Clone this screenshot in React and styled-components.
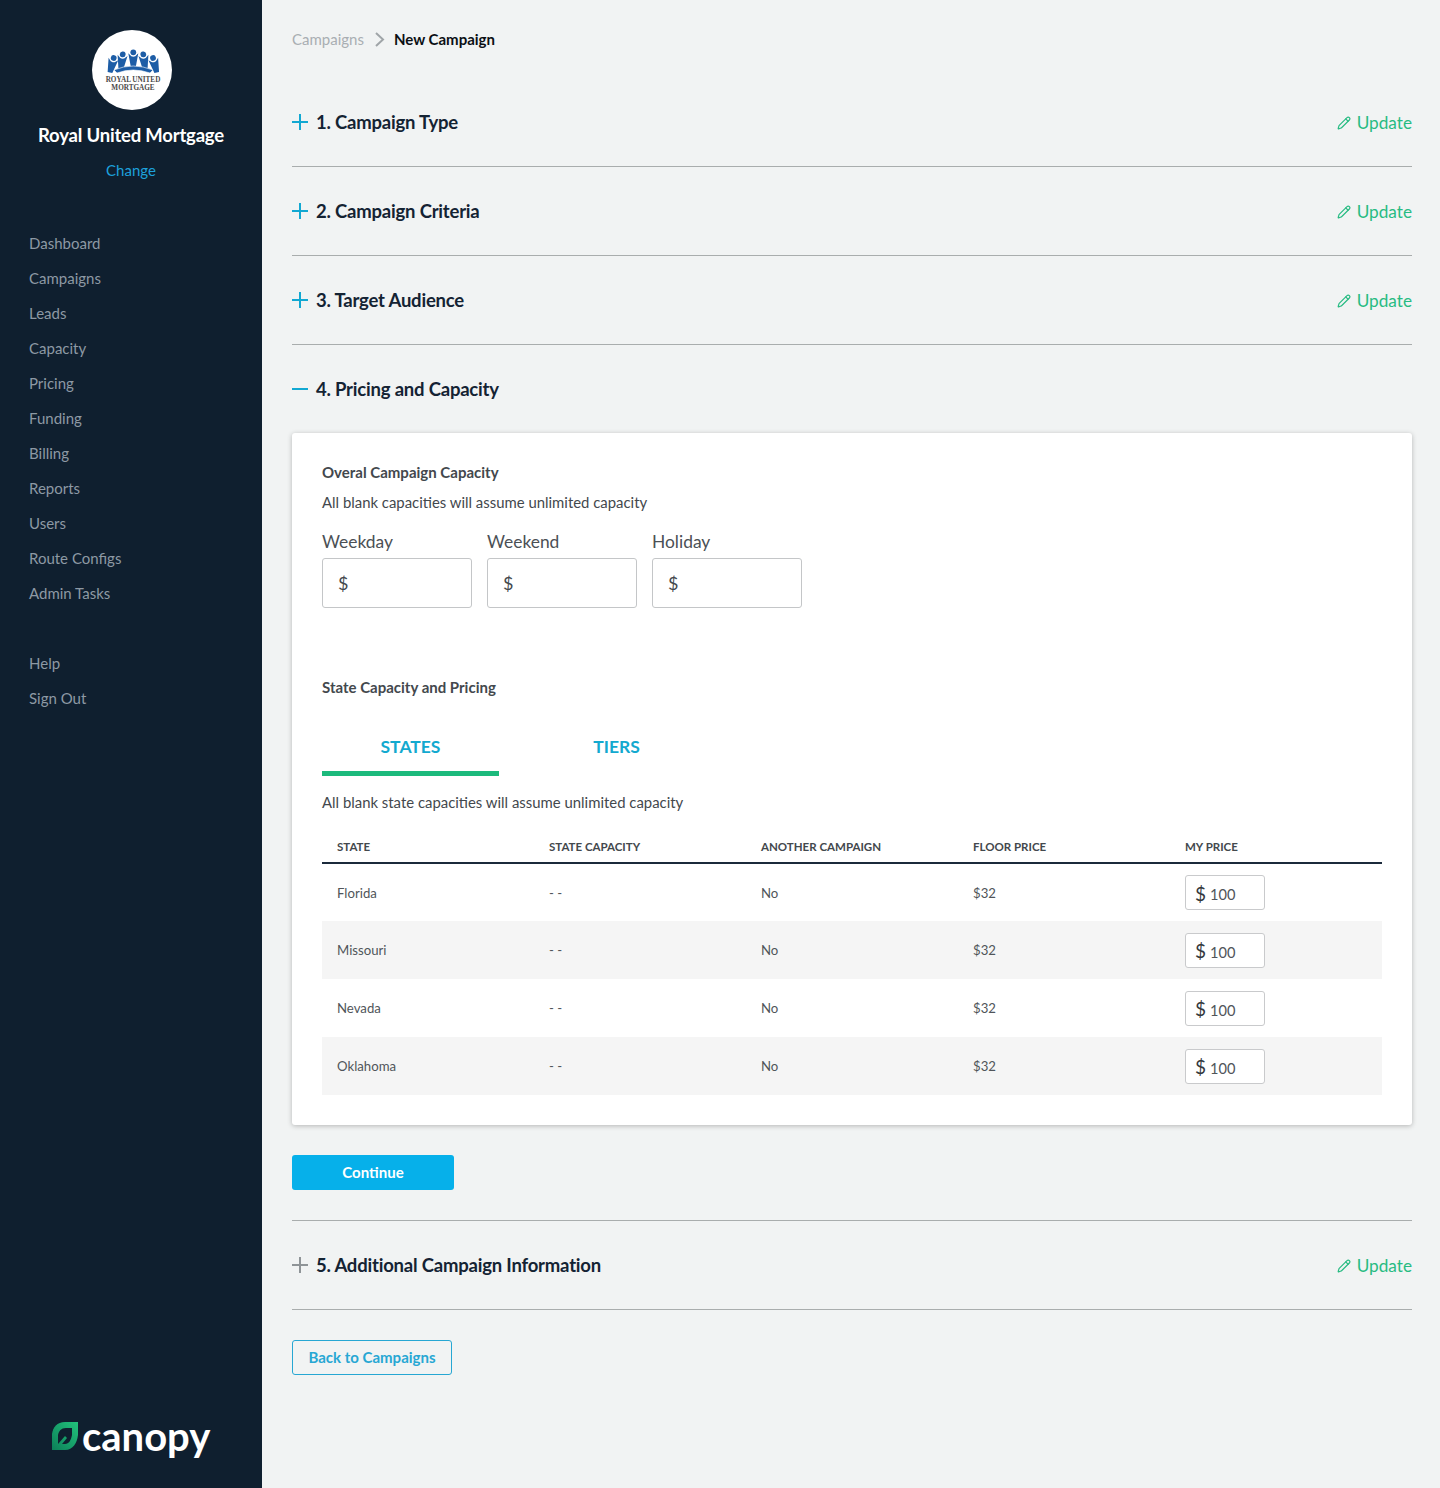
import React from "react";
import styled, { createGlobalStyle } from "styled-components";
import { Pencil } from "lucide-react";

const GlobalStyle = createGlobalStyle`
  html, body {
    margin: 0;
    padding: 0;
    background: #f1f3f3;
    font-family: Lato, "Open Sans", sans-serif;
  }
  * {
    box-sizing: border-box;
  }
`;

const Page = styled.div`
  display: flex;
  width: 1440px;
  min-height: 1488px;
`;

const Sidebar = styled.aside`
  width: 262px;
  flex-shrink: 0;
  background: #0f1f2f;
  display: flex;
  flex-direction: column;
  align-items: stretch;
  padding: 30px 0 34px;
`;

const LogoCircle = styled.div`
  width: 80px;
  height: 80px;
  margin-left: 92px;
  border-radius: 50%;
  background: #fff;
  display: flex;
  flex-direction: column;
  align-items: center;
  padding-top: 19px;
  padding-left: 2px;
`;

const LogoText = styled.div`
  margin-top: ${(p) => p.$top || 0}px;
  font-family: "Liberation Serif", serif;
  font-weight: 700;
  font-size: 7.2px;
  line-height: 8px;
  color: #4a4a4a;
  text-align: center;
  white-space: nowrap;
`;

const CompanyName = styled.div`
  margin-top: 12px;
  color: #fff;
  font-size: 18.5px;
  font-weight: 700;
  letter-spacing: -0.2px;
  line-height: 26px;
  text-align: center;
`;

const ChangeLink = styled.a`
  margin-top: 12px;
  color: #1da1dc;
  font-size: 15px;
  line-height: 20px;
  text-align: center;
`;

const Nav = styled.nav`
  display: flex;
  flex-direction: column;
  margin-top: ${(p) => p.$top}px;
  padding-left: 29px;
`;

const NavItem = styled.a`
  color: #8d99a4;
  font-size: 15px;
  line-height: 35px;
  height: 35px;
`;

const CanopyRow = styled.div`
  margin-top: auto;
  display: flex;
  align-items: center;
  gap: 4px;
  padding-left: 52px;
  height: 36px;
`;

const CanopyWord = styled.span`
  color: #fff;
  font-size: 40px;
  font-weight: 700;
  line-height: 36px;
`;

const Main = styled.main`
  flex: 1;
  padding: 0 28px 0 30px;
`;

const Breadcrumb = styled.div`
  display: flex;
  align-items: center;
  height: 78px;
  font-size: 15px;
`;

const Crumb = styled.span`
  color: #a9aeb2;
`;

const CrumbCurrent = styled.span`
  color: #0b0f14;
  font-weight: 700;
`;

const CrumbChevron = styled.svg`
  margin: 0 9px 0 10px;
`;

const SectionRow = styled.div`
  display: flex;
  align-items: center;
  justify-content: space-between;
  height: ${(p) => (p.$open ? 88 : 89)}px;
  padding-bottom: ${(p) => (p.$open ? 0 : 1)}px;
  border-bottom: ${(p) => (p.$open ? "none" : "1px solid #a9adad")};
`;

const SectionTitle = styled.h2`
  display: flex;
  align-items: center;
  gap: 8px;
  margin: 0;
  color: #142333;
  font-size: 18.5px;
  font-weight: 700;
  letter-spacing: -0.2px;
  line-height: 26px;
`;

const UpdateLink = styled.a`
  display: flex;
  align-items: center;
  gap: 6px;
  color: #27bb82;
  font-size: 17.2px;
  line-height: 24px;
  padding-top: 2px;
`;

const Card = styled.section`
  background: #fff;
  border-radius: 3px;
  box-shadow: 0 1px 5px rgba(0, 0, 0, 0.25);
  padding: 29px 30px 30px;
  height: 692px;
`;

const CardTitle = styled.h3`
  margin: 0;
  color: #43484d;
  font-size: 15px;
  font-weight: 700;
  line-height: 20px;
`;

const Note = styled.p`
  margin: ${(p) => p.$top}px 0 0;
  color: #43484d;
  font-size: 14.9px;
  line-height: 20px;
`;

const Capacities = styled.div`
  display: flex;
  gap: 15px;
  margin-top: 18px;
`;

const CapacityField = styled.label`
  display: flex;
  flex-direction: column;
  width: 150px;
`;

const FieldLabel = styled.span`
  color: #4b5055;
  font-size: 17.4px;
  line-height: 24px;
  margin-bottom: 4px;
`;

const CapacityBox = styled.div`
  height: 50px;
  display: flex;
  align-items: center;
  padding-left: 15px;
  background: #fff;
  border: 1px solid #c4c6c8;
  border-radius: 3px;
  color: #43484d;
  font-size: 18px;
`;

const StateTitle = styled(CardTitle)`
  margin-top: 69px;
`;

const Tabs = styled.div`
  display: flex;
  margin-top: 25px;
`;

const Tab = styled.div`
  width: ${(p) => p.$width}px;
  height: 54px;
  padding-top: 10px;
  text-align: center;
  color: #13a9cf;
  font-size: 17.5px;
  font-weight: 700;
  line-height: 30px;
  border-bottom: 5px solid ${(p) => (p.$active ? "#1cba7c" : "transparent")};
`;

const Table = styled.table`
  width: 1060px;
  margin-top: 22px;
  border-collapse: collapse;
  table-layout: fixed;
`;

const HeadCell = styled.th`
  height: 29px;
  padding: 0 15px 4px;
  text-align: left;
  vertical-align: middle;
  color: #43484d;
  font-size: 11.5px;
  font-weight: 700;
  border-bottom: 2px solid #1b2a3b;
`;

const Row = styled.tr`
  height: 58px;
  background: ${(p) => (p.$shaded ? "#f5f5f5" : "#fff")};
`;

const Cell = styled.td`
  padding: 0 15px;
  color: #50555a;
  font-size: 13.2px;
`;

const PriceBox = styled.div`
  width: 80px;
  height: 35px;
  display: flex;
  align-items: center;
  gap: 4px;
  padding: 4px 0 0 9px;
  background: #fff;
  border: 1px solid #c9cacc;
  border-radius: 3px;
  color: #50555a;
  font-size: 14.6px;
`;

const Dollar = styled.span`
  color: #33383d;
  font-size: 19px;
  line-height: 20px;
  margin-top: -2px;
`;

const ContinueButton = styled.button`
  display: block;
  width: 162px;
  height: 35px;
  margin: 30px 0;
  padding-bottom: 3px;
  border: none;
  border-radius: 3px;
  background: #06b0ea;
  color: #fff;
  font-family: inherit;
  font-size: 15px;
  font-weight: 700;
`;

const Divider = styled.hr`
  margin: 0;
  border: none;
  border-top: 1px solid #a9adad;
`;

const BackButton = styled.button`
  display: block;
  width: 160px;
  height: 35px;
  margin-top: 30px;
  padding-bottom: 3px;
  border: 1px solid #27a7d3;
  border-radius: 3px;
  background: transparent;
  color: #27a7d3;
  font-family: inherit;
  font-size: 15px;
  font-weight: 700;
`;

const menu = ["Dashboard", "Campaigns", "Leads", "Capacity", "Pricing", "Funding", "Billing", "Reports", "Users", "Route Configs", "Admin Tasks"];
const states = ["Florida", "Missouri", "Nevada", "Oklahoma"];
const columns = ["STATE", "STATE CAPACITY", "ANOTHER CAMPAIGN", "FLOOR PRICE", "MY PRICE"];

function Toggle({ open, color = "#12a8d2" }) {
  return (
    <svg width="16" height="16" viewBox="0 0 16 16">
      <rect x="0" y="7" width="16" height="2" fill={color} />
      {!open && <rect x="7" y="0" width="2" height="16" fill={color} />}
    </svg>
  );
}

function Crown() {
  const figures = [[4.7, 8.7, -24], [14.7, 5.3, -12], [26.3, 3.3, 0], [37.3, 5.3, 12], [48, 8.7, 24]];
  return (
    <svg width="53" height="25" viewBox="0 0 53 25">
      {figures.map(([x, y, tilt]) => (
        <g key={x} fill="#1d5da6" transform={`rotate(${-tilt * 0.6} ${x} ${y + 8})`}>
          <circle cx={x} cy={y} r="2.9" />
          <path d={`M${x - 5} ${y + 1}L${x - 2} ${y + 4}L${x} ${y + 4.5}L${x + 2} ${y + 4}L${x + 5} ${y + 1}L${x + 2.4} ${y + 15}L${x - 2.4} ${y + 15}Z`} />
        </g>
      ))}
      <path d="M7 21Q26 13 46 21L43 24Q26 18 10 24Z" fill="#1d5da6" stroke="#fff" strokeWidth="0.6" />
    </svg>
  );
}

function Leaf() {
  return (
    <svg width="26" height="28" viewBox="0 0 26 28">
      <defs>
        <linearGradient id="leaf" x1="0" y1="1" x2="1" y2="0">
          <stop offset="0" stopColor="#0c7f58" />
          <stop offset="1" stopColor="#22c27c" />
        </linearGradient>
      </defs>
      <path d="M26 0H13C5 0 1 5 0 12V28H13C21 28 25 21 26 13Z" fill="url(#leaf)" />
      <path d="M20 6H14C9 6 7 9 6 13V22L13 14L15 16L10 22H13C17 22 19 18 20 13Z" fill="#0f1f2f" />
    </svg>
  );
}

function Section({ title, open, muted }) {
  return (
    <SectionRow $open={open}>
      <SectionTitle>
        <Toggle open={open} color={muted ? "#8f9497" : undefined} />
        <span>{title}</span>
      </SectionTitle>
      {!open && (
        <UpdateLink>
          <Pencil size={14} strokeWidth={2} />
          Update
        </UpdateLink>
      )}
    </SectionRow>
  );
}

export default function App() {
  return (
    <Page>
      <GlobalStyle />
      <Sidebar>
        <LogoCircle>
          <Crown />
          <LogoText $top={2}>ROYAL UNITED</LogoText>
          <LogoText>MORTGAGE</LogoText>
        </LogoCircle>
        <CompanyName>Royal United Mortgage</CompanyName>
        <ChangeLink>Change</ChangeLink>
        <Nav $top={46}>
          {menu.map((item) => (
            <NavItem key={item}>{item}</NavItem>
          ))}
        </Nav>
        <Nav $top={35}>
          <NavItem>Help</NavItem>
          <NavItem>Sign Out</NavItem>
        </Nav>
        <CanopyRow>
          <Leaf />
          <CanopyWord>canopy</CanopyWord>
        </CanopyRow>
      </Sidebar>
      <Main>
        <Breadcrumb>
          <Crumb>Campaigns</Crumb>
          <CrumbChevron width="11" height="15" viewBox="0 0 11 15">
            <path d="M2 1L9 7.5L2 14" fill="none" stroke="#a0a5a8" strokeWidth="2" />
          </CrumbChevron>
          <CrumbCurrent>New Campaign</CrumbCurrent>
        </Breadcrumb>
        <Section title="1. Campaign Type" />
        <Section title="2. Campaign Criteria" />
        <Section title="3. Target Audience" />
        <Section title="4. Pricing and Capacity" open />
        <Card>
          <CardTitle>Overal Campaign Capacity</CardTitle>
          <Note $top={10}>All blank capacities will assume unlimited capacity</Note>
          <Capacities>
            {["Weekday", "Weekend", "Holiday"].map((name) => (
              <CapacityField key={name}>
                <FieldLabel>{name}</FieldLabel>
                <CapacityBox>$</CapacityBox>
              </CapacityField>
            ))}
          </Capacities>
          <StateTitle>State Capacity and Pricing</StateTitle>
          <Tabs>
            <Tab $width={177} $active>STATES</Tab>
            <Tab $width={235}>TIERS</Tab>
          </Tabs>
          <Note $top={16}>All blank state capacities will assume unlimited capacity</Note>
          <Table>
            <thead>
              <tr>
                {columns.map((c) => (
                  <HeadCell key={c}>{c}</HeadCell>
                ))}
              </tr>
            </thead>
            <tbody>
              {states.map((state, i) => (
                <Row key={state} $shaded={i % 2 === 1}>
                  <Cell>{state}</Cell>
                  <Cell>- -</Cell>
                  <Cell>No</Cell>
                  <Cell>$32</Cell>
                  <Cell>
                    <PriceBox>
                      <Dollar>$</Dollar>
                      100
                    </PriceBox>
                  </Cell>
                </Row>
              ))}
            </tbody>
          </Table>
        </Card>
        <ContinueButton>Continue</ContinueButton>
        <Divider />
        <Section title="5. Additional Campaign Information" muted />
        <BackButton>Back to Campaigns</BackButton>
      </Main>
    </Page>
  );
}
